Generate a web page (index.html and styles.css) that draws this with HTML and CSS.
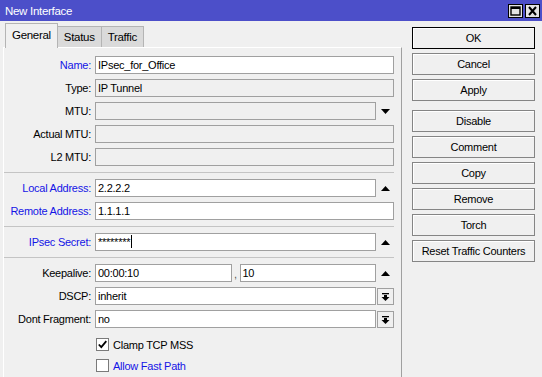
FILE: index.html
```html
<!DOCTYPE html>
<html lang="en">
<head>
    <meta charset="UTF-8">
    <meta name="viewport" content="width=device-width, initial-scale=1.0">
    <title>New Interface</title>
    <link rel="stylesheet" href="styles.css">
</head>
<body>
    <div class="window">
        <div class="titlebar">
            <span class="title">New Interface</span>
            <div class="title-btns">
                <span class="tbtn">
                    <svg width="11" height="10" viewBox="0 0 11 10"><rect x="1" y="1" width="9" height="8" fill="none" stroke="#000" stroke-width="1.4"/><rect x="1" y="1" width="9" height="2" fill="#000"/></svg>
                </span>
                <span class="tbtn">
                    <svg width="11" height="10" viewBox="0 0 11 10"><path d="M2 1 L9 9 M9 1 L2 9" stroke="#000" stroke-width="2"/></svg>
                </span>
            </div>
        </div>

        <div class="main">
            <div class="left">
                <div class="tabs">
                    <div class="tab active">General</div>
                    <div class="tab">Status</div>
                    <div class="tab">Traffic</div>
                </div>

                <div class="panel">
                    <div class="form">
                        <div class="row">
                            <label class="blue">Name:</label>
                            <div class="field">IPsec_for_Office</div>
                        </div>
                        <div class="row">
                            <label>Type:</label>
                            <div class="field ro">IP Tunnel</div>
                        </div>
                        <div class="row">
                            <label>MTU:</label>
                            <div class="wrap">
                                <div class="field ro"></div>
                                <span class="arrow"><svg width="9" height="5" viewBox="0 0 9 5"><path d="M0 0 H9 L4.5 5 Z" fill="#000"/></svg></span>
                            </div>
                        </div>
                        <div class="row">
                            <label>Actual MTU:</label>
                            <div class="field ro"></div>
                        </div>
                        <div class="row">
                            <label>L2 MTU:</label>
                            <div class="field ro"></div>
                        </div>

                        <div class="sep"></div>

                        <div class="row">
                            <label class="blue">Local Address:</label>
                            <div class="wrap">
                                <div class="field">2.2.2.2</div>
                                <span class="arrow"><svg width="9" height="5" viewBox="0 0 9 5"><path d="M0 5 H9 L4.5 0 Z" fill="#000"/></svg></span>
                            </div>
                        </div>
                        <div class="row">
                            <label class="blue">Remote Address:</label>
                            <div class="field">1.1.1.1</div>
                        </div>

                        <div class="sep"></div>

                        <div class="row">
                            <label class="blue">IPsec Secret:</label>
                            <div class="wrap">
                                <div class="field">********<span class="caret"></span></div>
                                <span class="arrow"><svg width="9" height="5" viewBox="0 0 9 5"><path d="M0 5 H9 L4.5 0 Z" fill="#000"/></svg></span>
                            </div>
                        </div>

                        <div class="sep"></div>

                        <div class="row">
                            <label>Keepalive:</label>
                            <div class="wrap">
                                <div class="field">00:00:10</div>
                                <span class="comma">,</span>
                                <div class="field">10</div>
                                <span class="arrow"><svg width="9" height="5" viewBox="0 0 9 5"><path d="M0 5 H9 L4.5 0 Z" fill="#000"/></svg></span>
                            </div>
                        </div>
                        <div class="row">
                            <label>DSCP:</label>
                            <div class="wrap">
                                <div class="field">inherit</div>
                                <span class="drop"><svg width="9" height="9" viewBox="0 0 9 9"><rect x="1" y="1" width="7" height="1.3" fill="#000"/><rect x="3" y="3" width="3" height="2" fill="#000"/><path d="M0.5 5 H8.5 L4.5 9 Z" fill="#000"/></svg></span>
                            </div>
                        </div>
                        <div class="row">
                            <label>Dont Fragment:</label>
                            <div class="wrap">
                                <div class="field">no</div>
                                <span class="drop"><svg width="9" height="9" viewBox="0 0 9 9"><rect x="1" y="1" width="7" height="1.3" fill="#000"/><rect x="3" y="3" width="3" height="2" fill="#000"/><path d="M0.5 5 H8.5 L4.5 9 Z" fill="#000"/></svg></span>
                            </div>
                        </div>

                        <div class="checks">
                            <div class="row">
                                <label></label>
                                <div class="check">
                                    <span class="box"><svg width="11" height="11" viewBox="0 0 11 11"><path d="M1.8 5.5 L4.3 8.2 L9.3 2.2" fill="none" stroke="#000" stroke-width="1.8"/></svg></span>
                                    <span>Clamp TCP MSS</span>
                                </div>
                            </div>
                            <div class="row">
                                <label></label>
                                <div class="check">
                                    <span class="box"></span>
                                    <span class="blue">Allow Fast Path</span>
                                </div>
                            </div>
                        </div>
                    </div>
                </div>
            </div>

            <div class="actions">
                <button class="default">OK</button>
                <button>Cancel</button>
                <button>Apply</button>
                <button class="spaced">Disable</button>
                <button>Comment</button>
                <button>Copy</button>
                <button>Remove</button>
                <button>Torch</button>
                <button>Reset Traffic Counters</button>
            </div>
        </div>
    </div>
</body>
</html>
```

FILE: styles.css
```css
body {
    margin: 0;
    font-family: "Liberation Sans", Arial, sans-serif;
    font-size: 11px;
    letter-spacing: -0.25px;
    color: #000;
}
.window {
    width: 542px;
    height: 377px;
    background: #f0f0f0;
    display: flex;
    flex-direction: column;
    overflow: hidden;
}
.titlebar {
    height: 21px;
    flex: none;
    background: #4c4fc9;
    color: #fff;
    display: flex;
    align-items: center;
    justify-content: space-between;
    padding-left: 5px;
    padding-right: 2px;
}
.title {
    font-size: 11.5px;
    letter-spacing: -0.3px;
}
.title-btns {
    display: flex;
    gap: 2px;
}
.tbtn {
    width: 15px;
    height: 14px;
    box-sizing: border-box;
    border: 1px solid #000;
    background: #e4e4e4;
    display: flex;
    align-items: center;
    justify-content: center;
}
.main {
    flex: 1;
    display: flex;
}
.left {
    width: 402px;
    padding-left: 3px;
    box-sizing: border-box;
    display: flex;
    flex-direction: column;
}
.tabs {
    display: flex;
    align-items: flex-end;
    height: 26px;
    padding-left: 2px;
}
.tab {
    height: 21px;
    box-sizing: border-box;
    border: 1px solid #b4b4b4;
    border-bottom: none;
    background: #dadada;
    padding: 0 6px;
    display: flex;
    align-items: center;
    font-size: 11.5px;
    letter-spacing: -0.3px;
}
.tab + .tab {
    border-left: none;
}
.tab.active {
    height: 25px;
    margin-bottom: -1px;
    background: #f0f0f0;
    padding: 0 6px 3px 6px;
    position: relative;
    z-index: 1;
}
.panel {
    flex: 1;
    border-top: 1px solid #fff;
    border-left: 1px solid #fff;
    border-right: 1px solid #a0a0a0;
    padding: 8px 7px 0 0;
}
.form {
    display: flex;
    flex-direction: column;
    gap: 5px;
}
.row {
    display: grid;
    grid-template-columns: 87px 1fr;
    column-gap: 4px;
    align-items: center;
}
.row label {
    text-align: right;
    white-space: nowrap;
}
.blue {
    color: #1414e6;
}
.field {
    height: 18px;
    box-sizing: border-box;
    border: 1px solid #a0a0a0;
    background: #fff;
    padding: 0 2px;
    line-height: 16px;
    white-space: nowrap;
    overflow: hidden;
    min-width: 0;
}
.field.ro {
    background: #f0f0f0;
}
.wrap {
    display: flex;
    align-items: center;
}
.wrap .field {
    flex: 1;
}
.arrow {
    width: 17px;
    flex: none;
    display: flex;
    justify-content: center;
    padding-left: 1px;
}
.drop {
    width: 17px;
    height: 17px;
    margin-left: 1px;
    flex: none;
    box-sizing: border-box;
    border: 1px solid #a0a0a0;
    background: #f0f0f0;
    display: flex;
    align-items: center;
    justify-content: center;
}
.comma {
    width: 8px;
    flex: none;
    text-align: center;
    color: #555;
    line-height: 16px;
    padding-top: 2px;
}
.caret {
    display: inline-block;
    width: 1px;
    height: 13px;
    background: #000;
    vertical-align: -2px;
    margin-left: 1px;
}
.sep {
    height: 1px;
    background: #c4c4c4;
    margin: 1px 0;
}
.checks {
    display: flex;
    flex-direction: column;
    gap: 8px;
    margin-top: 5px;
}
.check {
    display: flex;
    align-items: center;
    gap: 4px;
    padding-left: 1px;
    height: 13px;
}
.box {
    width: 13px;
    height: 13px;
    box-sizing: border-box;
    border: 1px solid #7a7a7a;
    background: #fff;
    display: flex;
    align-items: center;
    justify-content: center;
}
.actions {
    flex: 1;
    padding: 6px 7px 0 10px;
    display: flex;
    flex-direction: column;
    gap: 4px;
}
button {
    height: 22px;
    width: 123px;
    box-sizing: border-box;
    border: 1px solid #858585;
    background: #f0f0f0;
    box-shadow: inset 1px 1px #fff;
    font-family: "Liberation Sans", Arial, sans-serif;
    font-size: 11px;
    letter-spacing: -0.25px;
    color: #000;
    padding: 0;
}
button.default {
    border-color: #000;
}
button.spaced {
    margin-top: 5px;
}
```
